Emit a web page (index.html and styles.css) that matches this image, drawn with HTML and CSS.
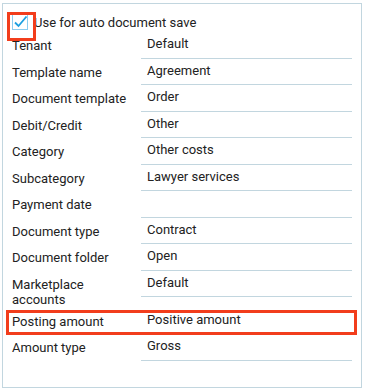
FILE: index.html
```html
<!DOCTYPE html>
<html lang="en">
<head>
    <meta charset="UTF-8">
    <meta name="viewport" content="width=device-width, initial-scale=1.0">
    <title>Document template settings</title>
    <link rel="stylesheet" href="styles.css">
</head>
<body>
    <div class="panel">
        <label class="check-row">
            <span class="check">
                <svg width="16" height="16" viewBox="0 0 16 16">
                    <rect x="0.5" y="0.5" width="15" height="15" fill="#fff" stroke="#8ccdf0"/>
                    <path d="M3 8.5 L6.5 12 L14.5 2.5" fill="none" stroke="#1c9fe0" stroke-width="1.8"/>
                </svg>
                <span class="mark"></span>
            </span>
            Use for auto document save
        </label>

        <div class="row">
            <div class="name">Tenant</div>
            <div class="field">Default</div>
        </div>
        <div class="row">
            <div class="name">Template name</div>
            <div class="field">Agreement</div>
        </div>
        <div class="row">
            <div class="name">Document template</div>
            <div class="field">Order</div>
        </div>
        <div class="row">
            <div class="name">Debit/Credit</div>
            <div class="field">Other</div>
        </div>
        <div class="row">
            <div class="name">Category</div>
            <div class="field">Other costs</div>
        </div>
        <div class="row">
            <div class="name">Subcategory</div>
            <div class="field">Lawyer services</div>
        </div>
        <div class="row">
            <div class="name">Payment date</div>
            <div class="field"></div>
        </div>
        <div class="row">
            <div class="name">Document type</div>
            <div class="field">Contract</div>
        </div>
        <div class="row">
            <div class="name">Document folder</div>
            <div class="field">Open</div>
        </div>
        <div class="row">
            <div class="name">Marketplace<br>accounts</div>
            <div class="field">Default</div>
        </div>
        <div class="row marked">
            <div class="name">Posting amount</div>
            <div class="field">Positive amount</div>
        </div>
        <div class="row">
            <div class="name">Amount type</div>
            <div class="field">Gross</div>
        </div>
    </div>
</body>
</html>
```

FILE: styles.css
```css
body {
    margin: 0;
    font-family: Roboto, "Liberation Sans", sans-serif;
    font-size: 13px;
    color: #222;
    background: #fff;
}
.panel {
    margin: 3px 0 0 2px;
    width: 360px;
    height: 385px;
    box-sizing: border-box;
    border: 1px solid #c2d6df;
    padding: 8px 9px 0 9px;
}
.check-row {
    display: flex;
    align-items: center;
    gap: 6px;
    height: 20px;
}
.check {
    position: relative;
    display: block;
    width: 16px;
    height: 16px;
}
.check svg {
    display: block;
}
.mark {
    position: absolute;
    left: -5px;
    top: -2px;
    width: 29px;
    height: 29px;
    box-sizing: border-box;
    border: 3px solid #f23d1c;
}
.row {
    position: relative;
    display: flex;
    align-items: flex-start;
}
.name {
    width: 129px;
    flex-shrink: 0;
    padding-top: 6px;
    line-height: 15.5px;
}
.field {
    flex: 1;
    min-height: 26.5px;
    box-sizing: border-box;
    padding: 4px 6px 0;
    line-height: 16px;
    border-bottom: 1px solid #c2d6df;
}
.marked::after {
    content: "";
    position: absolute;
    left: -6px;
    right: -5px;
    top: 2px;
    bottom: -1px;
    border: 3px solid #f23d1c;
}
```
